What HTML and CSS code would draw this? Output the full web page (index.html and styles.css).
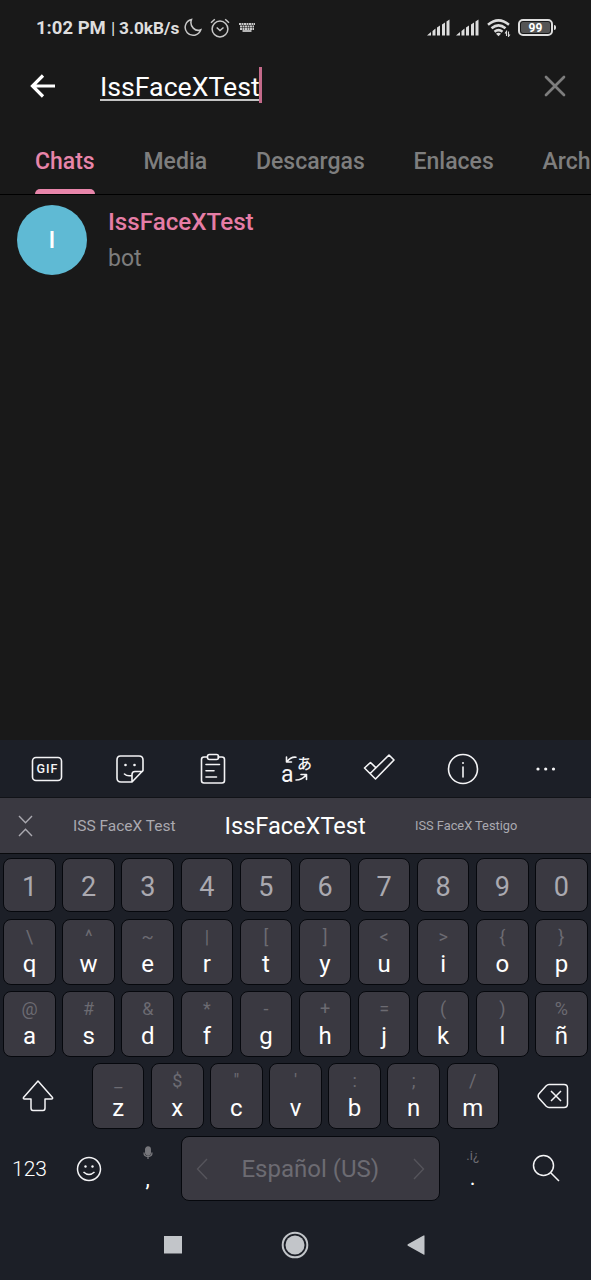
FILE: index.html
```html
<!DOCTYPE html>
<html lang="es">
<head>
<meta charset="utf-8">
<title>IssFaceXTest</title>
<link rel="stylesheet" href="styles.css">
</head>
<body>
<div class="phone">
  <header class="status">
    <span class="clock">1:02 PM</span><span class="sep">|</span><span class="speed">3.0kB/s</span>
    <svg class="moon" width="18" height="20" viewBox="0 0 18 20"><path d="M7.500 1.500 A8 8 0 1 0 16.800 11.800 C11.500 14 5 8.500 7.500 1.500Z"/></svg>
    <svg class="alarm" width="20" height="20" viewBox="0 0 20 20"><circle cx="10" cy="11" r="7.900"/><path d="M6.700 9.500 L10 12.500 L13.500 9.500 M1 4.800 L4.800 1.300 M15.200 1.300 L19 4.800"/></svg>
    <svg class="kbd" width="16" height="9" viewBox="0 0 16 9"><path d="M0 1 H16 M1 3.500 H15 M1 6 H15" stroke-dasharray="2 .5"/><path d="M3.500 8 H12.500"/></svg>
    <svg class="signal" width="24" height="17" viewBox="0 0 24 17"><path d="M0 16.500 L4 13 V16.500Z M5.500 12 L8.500 9.500 V16.500 H5.500Z M10 8.500 L13 6.500 V16.500 H10Z M15 5.500 L18 3.500 V16.500 H15Z M19.500 2.500 L22.500 .5 V16.500 H19.500Z"/></svg>
    <svg class="signal second" width="24" height="17" viewBox="0 0 24 17"><path d="M0 16.500 L4 13 V16.500Z M5.500 12 L8.500 9.500 V16.500 H5.500Z M10 8.500 L13 6.500 V16.500 H10Z M15 5.500 L18 3.500 V16.500 H15Z M19.500 2.500 L22.500 .5 V16.500 H19.500Z"/></svg>
    <svg class="wifi" width="24" height="18" viewBox="0 0 24 18"><path class="arc" d="M1 5.800 Q11.500 -3 22 5.800 M4.500 9.300 Q11.500 3.500 18.500 9.300 M7.500 12.800 Q11.500 9.500 15.500 12.800"/><path class="dot" d="M9 14.800 Q11.500 12.500 14 14.800 L11.500 17.300Z"/><path class="tiny" d="M19.500 17 V12.500 L18 14.500 M21.500 12.500 V17.300 L23 15.500"/></svg>
    <div class="battery"><span>99</span><i></i></div>
  </header>

  <div class="search">
    <svg class="back" width="26" height="26" viewBox="0 0 26 26"><path d="M25 13 H3 M13 2.500 L2.500 13 L13 23.500"/></svg>
    <div class="query"><span>IssFaceXTest</span><i class="caret"></i></div>
    <svg class="clear" width="22" height="22" viewBox="0 0 22 22"><path d="M2 2 L20 20 M20 2 L2 20"/></svg>
  </div>

  <nav class="tabs">
    <span class="tab active">Chats</span><span class="tab">Media</span><span class="tab">Descargas</span><span class="tab">Enlaces</span><span class="tab">Arch</span>
  </nav>

  <main class="results">
    <div class="result">
      <div class="avatar">I</div>
      <div><div class="name">IssFaceXTest</div><div class="kind">bot</div></div>
    </div>
  </main>

  <section class="keyboard">
    <div class="tools">
      <svg width="34" height="34" viewBox="0 0 34 34"><rect x="2.500" y="5.500" width="29" height="23" rx="3.500"/><text x="17.500" y="21.300" text-anchor="middle">GIF</text></svg>
      <svg width="34" height="34" viewBox="0 0 34 34"><path d="M7.500 4 H26 Q30 4 30 8 V18.500 L19 30 H8 Q4 30 4 26 V8 Q4 4 7.500 4Z M19 29.500 V22.500 Q19 19.500 22 19.500 H29.500 M11.500 22 Q14 24.500 18.500 23.500"/><circle class="fill" cx="12.500" cy="13" r="1.300"/><circle class="fill" cx="21.500" cy="13" r="1.300"/></svg>
      <svg width="34" height="34" viewBox="0 0 34 34"><path d="M11 5 H8 Q5.500 5 5.500 7.500 V28.500 Q5.500 31 8 31 H26 Q28.500 31 28.500 28.500 V7.500 Q28.500 5 26 5 H22 M10 12.500 H23.500 M10 18.700 H18 M10 25 H20.500"/><rect x="11.500" y="2.500" width="11" height="5" rx="2"/></svg>
      <svg width="34" height="34" viewBox="0 0 34 34"><text class="latin" x="2" y="30">a</text><text class="kana" x="18" y="17">あ</text><path d="M17 5.200 Q12 4.500 8 9.500 M7.500 5 V10 H12.500 M17 28 Q23 28 27 23 M22 22.500 H27.500 V27.500"/></svg>
      <svg width="34" height="34" viewBox="0 0 34 34"><path d="M1.500 16 L7.500 10.500 L13 15.800 L26 3 L31 8 L12.500 27Z M13 15.800 L7.200 21.500"/></svg>
      <svg width="34" height="34" viewBox="0 0 34 34"><circle cx="17" cy="17" r="14.500"/><path d="M17 15 V25"/><circle class="fill" cx="17" cy="11" r="1"/></svg>
      <svg width="34" height="34" viewBox="0 0 34 34"><circle class="fill" cx="9" cy="17" r="1.600"/><circle class="fill" cx="16.700" cy="17" r="1.600"/><circle class="fill" cx="24.500" cy="17" r="1.600"/></svg>
    </div>
    <div class="suggestions">
      <svg width="16" height="22" viewBox="0 0 16 22"><path d="M1 1 L7.500 7.700 L14 1 M1 21 L7.500 14.300 L14 21"/></svg>
      <span class="s1">ISS FaceX Test</span><span class="s2">IssFaceXTest</span><span class="s3">ISS FaceX Testigo</span>
    </div>
    <div class="row digits"><b>1</b><b>2</b><b>3</b><b>4</b><b>5</b><b>6</b><b>7</b><b>8</b><b>9</b><b>0</b></div>
    <div class="row"><b><i>\</i>q</b><b><i>^</i>w</b><b><i>~</i>e</b><b><i>|</i>r</b><b><i>[</i>t</b><b><i>]</i>y</b><b><i>&lt;</i>u</b><b><i>&gt;</i>i</b><b><i>{</i>o</b><b><i>}</i>p</b></div>
    <div class="row"><b><i>@</i>a</b><b><i>#</i>s</b><b><i>&amp;</i>d</b><b><i>*</i>f</b><b><i>-</i>g</b><b><i>+</i>h</b><b><i>=</i>j</b><b><i>(</i>k</b><b><i>)</i>l</b><b><i>%</i>ñ</b></div>
    <div class="row third">
      <span class="plain shift"><svg width="32" height="34" viewBox="0 0 32 34"><path d="M16 2 L30.500 18.500 Q31 20 29.500 20 H23 V29 Q23 31.500 21 31.500 H11 Q9 31.500 9 29 V20 H2.500 Q1 20 1.500 18.500Z"/></svg></span>
      <b><i>_</i>z</b><b><i>$</i>x</b><b><i>"</i>c</b><b><i>'</i>v</b><b><i>:</i>b</b><b><i>;</i>n</b><b><i>/</i>m</b>
      <span class="plain erase"><svg width="32" height="26" viewBox="0 0 32 26"><path d="M12 1.500 H27 Q30.500 1.500 30.500 5 V21 Q30.500 24.500 27 24.500 H12 Q10.500 24.500 9 23 L1.800 15 Q0.500 13 1.800 11 L9 3 Q10.500 1.500 12 1.500Z M14 8 L24 18 M24 8 L14 18"/></svg></span>
    </div>
    <div class="row bottom">
      <span class="plain numeric">123</span>
      <span class="plain"><svg width="26" height="26" viewBox="0 0 26 26"><circle cx="13" cy="13" r="11.500"/><circle class="fill" cx="9.500" cy="10.500" r="1.200"/><circle class="fill" cx="16.500" cy="10.500" r="1.200"/><path d="M7.500 16 Q13 21 18.500 16"/></svg></span>
      <span class="plain comma"><svg width="10" height="14" viewBox="0 0 10 14"><rect x="2.700" y="1" width="4.600" height="8" rx="2.300"/><path d="M1 6.500 Q1 10.500 5 10.500 Q9 10.500 9 6.500 M5 10.500 V13"/></svg><em>,</em></span>
      <span class="space"><svg width="12" height="22" viewBox="0 0 12 22"><path d="M11 1 L1.500 11 L11 21"/></svg><em>Español (US)</em><svg width="12" height="22" viewBox="0 0 12 22"><path d="M1 1 L10.500 11 L1 21"/></svg></span>
      <span class="plain period"><small>.i¿</small><em>.</em></span>
      <span class="plain find"><svg width="28" height="28" viewBox="0 0 28 28"><circle cx="11.500" cy="11.500" r="10"/><path d="M18.700 18.700 L27 27"/></svg></span>
    </div>
    <div class="sysnav">
      <svg width="18" height="18" viewBox="0 0 18 18"><path d="M0 0 H18 V17.500 H0Z"/></svg>
      <svg width="28" height="28" viewBox="0 0 28 28"><circle class="ring" cx="14" cy="14" r="12.300"/><circle cx="14" cy="14" r="9.500"/></svg>
      <svg width="18" height="20" viewBox="0 0 18 20"><path d="M17.500 .5 V19.500 Q17.300 20 16.500 19.500 L.8 10.800 Q0 10 .8 9.200 L16.500 .5Z"/></svg>
    </div>
  </section>
</div>
</body>
</html>
```
FILE: styles.css
```css
* { box-sizing: border-box; }
body { margin: 0; background: #191919; font-family: Roboto, "Noto Sans CJK JP", sans-serif; }
svg { display: block; flex: none; fill: none; }
i, em, b, small { font-style: normal; font-weight: 400; }
.phone { width: 591px; height: 1280px; overflow: hidden; background: #191919; display: flex; flex-direction: column; }

.status { height: 55px; padding-left: 36px; display: flex; align-items: center; color: #dedede; font-size: 17.300px; font-weight: 700; white-space: nowrap; }
.clock { width: 75px; font-size: 18.500px; }
.sep { width: 8px; font-weight: 400; }
.speed { width: 65px; }
.status svg { stroke: #c8c8c8; stroke-width: 1.500; }
.moon { margin-right: 8px; }
.alarm { margin-right: 9px; }
.status .kbd { stroke-width: 1.800; margin-right: 172px; }
.status .signal { fill: #dcdcdc; stroke: none; margin-right: 5px; }
.status .wifi { stroke: #dcdcdc; stroke-width: 2.500; margin: 0 7px 0 2px; }
.status .dot { fill: #dcdcdc; stroke: none; }
.status .tiny { stroke-width: 1.100; }
.battery { width: 35px; height: 17px; border: 2px solid #dedede; border-radius: 5px; padding: 1px; position: relative; }
.battery span { display: block; height: 11px; background: #555; border-radius: 2px; font-size: 12px; line-height: 12px; text-align: center; color: #fff; }
.battery i { position: absolute; right: -5px; top: 4px; width: 2px; height: 5px; background: #dedede; border-radius: 0 2px 2px 0; }

.search { height: 79px; padding: 0 25px 17px 30px; display: flex; align-items: center; }
.back { stroke: #fff; stroke-width: 3.200; }
.query { margin-left: 44px; flex: 1; display: flex; align-items: center; color: #fff; font-size: 26.700px; }
.query span { border-bottom: 2px solid #c4c4c4; line-height: 28px; height: 28px; margin-top: 1px; }
.caret { width: 3px; height: 36px; margin: -2px 0 0 -1px; background: #c46a8a; }
.clear { stroke: #7d7d7d; stroke-width: 2.700; stroke-linecap: round; }

.tabs { height: 61px; padding-left: 35px; border-bottom: 1px solid #000; display: flex; gap: 48.800px; overflow: hidden; color: #7e7e7e; font-size: 23px; font-weight: 500; }
.tab { line-height: 56px; height: 60px; flex: none; }
.active { color: #e885aa; display: flex; flex-direction: column; }
.active::after { content: ""; height: 5px; margin-top: -1px; border-radius: 5px 5px 0 0; background: #e885aa; }

.results { flex: 1; padding: 10px 17px; }
.result { display: flex; }
.avatar { width: 70px; height: 70px; margin-right: 21px; border-radius: 50%; background: #5fbad4; color: #fff; font-size: 24px; font-weight: 500; line-height: 70px; text-align: center; }
.name { color: #e67da6; font-size: 24.200px; font-weight: 500; line-height: 35px; }
.kind { color: #7d7d7d; font-size: 23px; line-height: 37px; }

.keyboard { height: 540px; background: #1c1f27; }
.tools { height: 57px; padding: 0 28px 0 30px; display: flex; justify-content: space-between; align-items: center; }
.tools svg { stroke: #f4f4f6; stroke-width: 1.600; stroke-linejoin: round; stroke-linecap: round; }
.tools .fill, .plain .fill { fill: #f4f4f6; stroke: none; }
.tools text { fill: #f4f4f6; stroke: none; font-size: 12.500px; font-weight: 500; letter-spacing: 1px; }
.tools .latin { font-size: 23px; font-weight: 400; letter-spacing: 0; }
.tools .kana { font-size: 15px; font-weight: 500; letter-spacing: 0; }
.suggestions { height: 57px; background: #3a3941; border-top: 1px solid #111318; border-bottom: 1px solid #08090c; display: flex; align-items: center; color: #aaa9b0; }
.suggestions svg { margin-left: 18px; stroke: #aaa9b0; stroke-width: 1.400; }
.s1 { width: 151.500px; margin-left: 39px; font-size: 15.500px; }
.s2 { width: 190.500px; font-size: 23.600px; color: #fff; }
.s3 { font-size: 12.800px; }

.row { height: 72.300px; padding: 3.300px 0; display: flex; color: #fff; font-size: 24px; }
.row b, .space { background: #3a3941; border: 1.200px solid #06080d; border-radius: 8px; }
.row b { width: 52.500px; margin: 0 3.300px; display: flex; flex-direction: column; align-items: center; line-height: 27px; }
.row i { color: #6c6b72; font-size: 18px; height: 31px; line-height: 34px; }
.digits { height: 61.500px; padding-top: 4px; }
.digits b { color: #aaa9b0; font-size: 27px; justify-content: center; padding-top: 4px; }
.plain { width: 59.100px; display: flex; flex-direction: column; align-items: center; justify-content: center; flex: none; }
.plain svg { stroke: #f4f4f6; stroke-width: 1.500; stroke-linejoin: round; }
.shift { width: 88.650px; padding-right: 12px; }
.erase { width: 88.650px; padding-left: 12px; }
.find { width: 88.650px; padding-right: 2px; padding-bottom: 2px; }
.numeric { font-size: 21px; font-weight: 300; padding-top: 1px; }
.plain.comma, .plain.period { justify-content: flex-start; }
.plain.comma svg { margin-top: 10px; stroke: #77777c; stroke-width: 1.300; }
.comma rect { fill: #77777c; }
.comma em, .period em { font-size: 22px; line-height: 26px; margin-top: 6px; }
.period small { font-size: 13px; line-height: 16px; margin-top: 12px; color: #6c6b72; }
.row .period em { margin-top: 1px; }
.space { width: 259.300px; margin: 0 3.300px; padding: 0 14px; display: flex; align-items: center; justify-content: space-between; color: #6c6b72; }
.space svg { stroke: #55545b; stroke-width: 1.400; }

.sysnav { height: 80px; padding: 0 166px 0 164px; display: flex; justify-content: space-between; align-items: center; }
.sysnav svg { fill: #c2c5c9; }
.sysnav .ring { fill: none; stroke: #c2c5c9; stroke-width: 2; }
```
